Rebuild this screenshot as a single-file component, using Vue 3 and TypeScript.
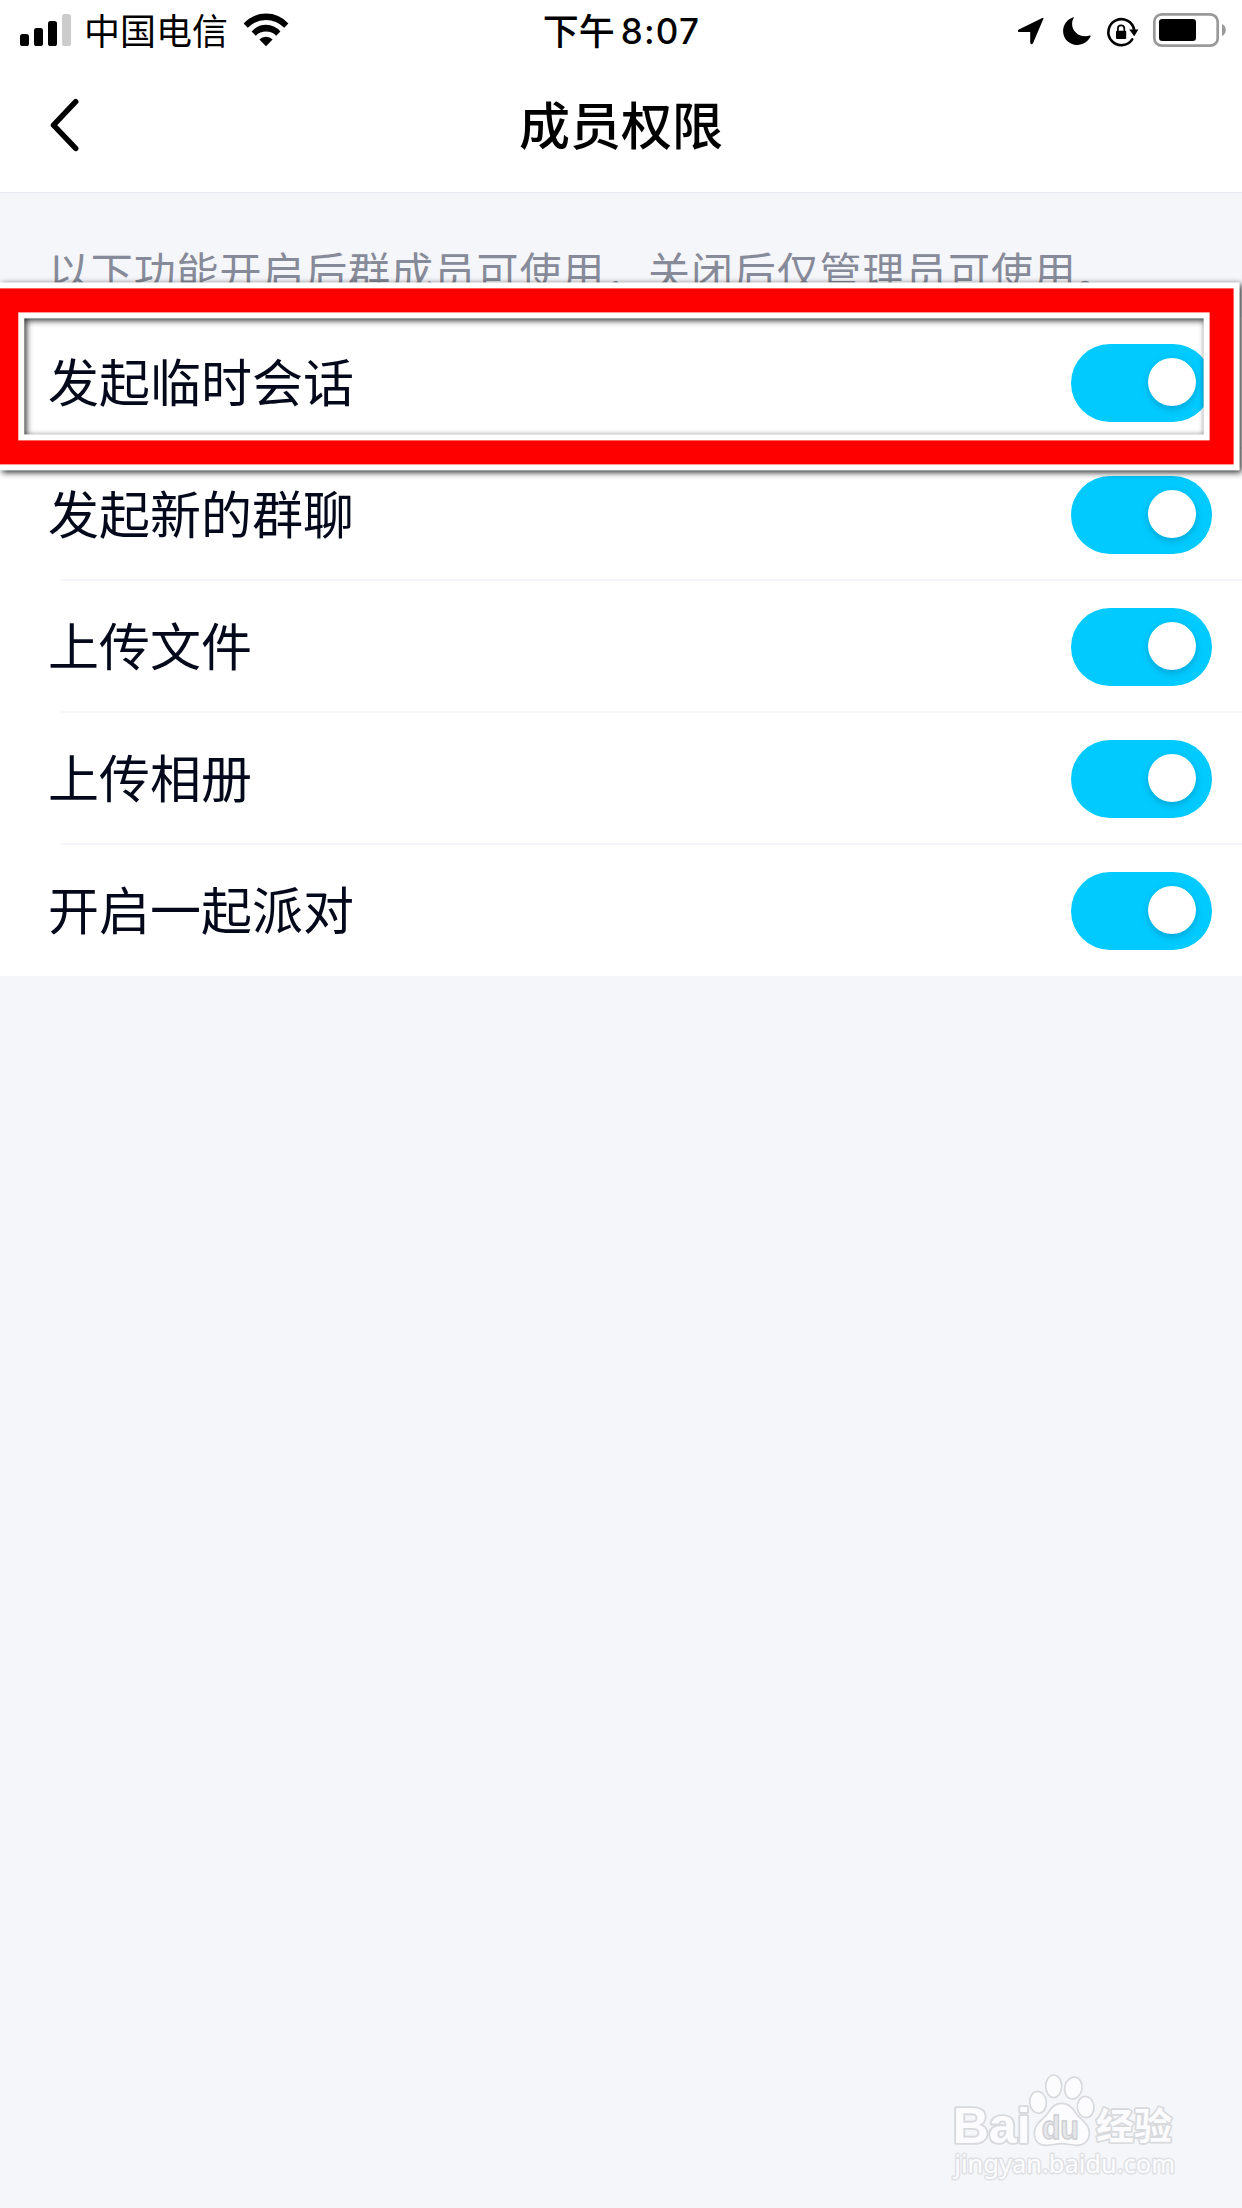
<script setup lang="ts">
import { ref } from 'vue'

interface Permission {
  id: string
  label: string
  enabled: boolean
}

const permissions = ref<Permission[]>([
  { id: 'temp-chat', label: '发起临时会话', enabled: true },
  { id: 'new-group', label: '发起新的群聊', enabled: true },
  { id: 'upload-file', label: '上传文件', enabled: true },
  { id: 'upload-album', label: '上传相册', enabled: true },
  { id: 'party', label: '开启一起派对', enabled: true },
])
</script>

<template>
  <div class="screen">
    <header class="top">
      <div class="status">
        <div class="status-left">
          <svg class="signal" width="51" height="32" viewBox="0 0 51 32">
            <rect x="0" y="20" width="9" height="12" rx="2.6" />
            <rect x="14" y="14" width="9" height="18" rx="2.6" />
            <rect x="28" y="7" width="9" height="25" rx="2.6" />
            <rect x="42" y="0" width="9" height="32" rx="2.6" fill="#ccc" />
          </svg>
          <span class="carrier">中国电信</span>
          <svg class="wifi" width="46" height="34" viewBox="0 0 46 34">
            <path d="M.6 10.4Q10 .5 23 .5t22.400 9.900L41.200 14.700Q33.500 7 23 7T4.800 14.700Z" />
            <path d="M8.600 18.500Q14.500 11.800 23 11.800t14.400 6.700L33.200 22.700Q29 18.600 23 18.600t-10.200 4.100Z" />
            <path d="M16.400 26.600Q19 23.700 23 23.700t6.600 2.900L23 33.200Z" />
          </svg>
        </div>
        <div class="clock"><span>下午</span><span class="digits">8:07</span></div>
        <svg class="status-right" width="212" height="36" viewBox="1016 12 212 36">
          <path d="M1043.500 18.600 1033 43.300q-.9 1.400-1.900.8-.9-.4-.9-1.600V32.100h-10.600q-1.500 0-1.700-1.200-.1-.9 1-1.400l22.800-11.200q1.300-.5 1.700-.2.5.4.100.5Z" />
          <path d="M1073.300 17.200c-6 2-10.200 7.500-10.200 13.900 0 8 6.200 13.900 13.900 13.900 6.200 0 11.300-3.500 13.600-8.700.3-.8-.2-1.100-.9-.8-9.600 3-17.600-3.800-17.600-11.600 0-2.300.6-4.100 1.600-5.800.4-.7.300-1-.4-.9Z" />
          <path d="M1132.200 39.400A13 13 0 1 1 1134.200 30" fill="none" stroke="#000" stroke-width="2.600" stroke-linecap="round" />
          <path d="M1129.200 29.600h9.200l-4.200 6.600Z" />
          <rect x="1116" y="30.700" width="10.200" height="8.300" rx="1" />
          <path d="M1117.900 31v-2.400a3.200 3.200 0 0 1 6.400 0V31" fill="none" stroke="#000" stroke-width="1.700" />
          <rect x="1154.300" y="14.300" width="63.400" height="31.400" rx="7.500" fill="none" stroke="#999" stroke-width="2.700" />
          <rect x="1159" y="19" width="37" height="22" rx="3.300" />
          <path d="M1222 24c5 1.800 5 10.200 0 12Z" fill="#999" />
        </svg>
      </div>
      <div class="nav">
        <svg class="back" width="30" height="56" viewBox="0 0 30 56">
          <path d="M26.700 4.700 4.500 28.200l22.200 23.200" fill="none" stroke="#000" stroke-width="5.500" stroke-linecap="round" stroke-linejoin="round" />
        </svg>
        <h1>成员权限</h1>
      </div>
    </header>

    <p class="hint">以下功能开启后群成员可使用<span class="mark">，</span>关闭后仅管理员可使用<span class="mark">。</span></p>

    <main class="list">
      <div v-for="item in permissions" :key="item.id" class="row">
        <span class="label">{{ item.label }}</span>
        <button
          class="toggle"
          :class="{ on: item.enabled }"
          role="switch"
          :aria-checked="item.enabled"
          :aria-label="item.label"
          @click="item.enabled = !item.enabled"
        >
          <span class="knob"></span>
        </button>
      </div>
    </main>

    <svg class="marker" width="1242" height="220" viewBox="0 270 1242 220">
      <rect x="6.300" y="300.400" width="1215.300" height="152" fill="none" stroke="#fff" stroke-width="36" />
      <rect x="6.300" y="300.400" width="1215.300" height="152" fill="none" stroke="#f00" stroke-width="24" />
    </svg>

    <svg class="watermark" width="270" height="150" viewBox="0 0 810 450">
      <g class="wm">
        <text class="bai" x="68" y="280" textLength="234" lengthAdjust="spacingAndGlyphs">Bai</text>
        <ellipse cx="324" cy="157" rx="25" ry="33" transform="rotate(-6 324 157)" />
        <ellipse cx="371" cy="109" rx="24" ry="34" />
        <ellipse cx="430" cy="114" rx="26" ry="33" transform="rotate(12 430 114)" />
        <ellipse cx="467" cy="171" rx="25" ry="32" transform="rotate(-5 467 171)" />
        <path d="M395 160c19 0 31 10 41 27 14 22 42 32 42 62 0 24-16 37-38 37-17 0-27-5-45-5s-28 5-45 5c-23 0-37-14-37-37 0-30 28-39 42-62 10-17 21-27 40-27Z" />
        <text class="jy" x="498" y="271" textLength="228" lengthAdjust="spacingAndGlyphs">经验</text>
        <text class="url" x="73" y="370" textLength="662" lengthAdjust="spacingAndGlyphs">jingyan.baidu.com</text>
      </g>
      <text class="du" x="335" y="266" textLength="112" lengthAdjust="spacingAndGlyphs">du</text>
    </svg>
  </div>
</template>

<style>
body {
  margin: 0;
  background: #f5f6fa;
}
</style>

<style scoped>
.screen {
  position: relative;
  width: 1242px;
  height: 2208px;
  overflow: hidden;
  background: #f5f6fa;
  color: #03081a;
  font-family: "Noto Sans CJK SC", sans-serif;
}

.top {
  box-sizing: border-box;
  height: 193px;
  background: #fff;
  border-bottom: 1px solid #e8e9f2;
  color: #000;
}

.status {
  display: grid;
  grid-template-columns: 1fr auto 1fr;
  height: 60px;
  align-items: center;
  padding: 0 14px 0 20px;
}

.status-left {
  display: flex;
  align-items: center;
}

.carrier {
  margin: -2px 0 0 13px;
  font-size: 36px;
  line-height: 52px;
}

.wifi {
  margin: -1px 0 0 15px;
}

.clock {
  display: flex;
  align-items: center;
  margin: -2px 5px 0 0;
  font-size: 36px;
  line-height: 52px;
  font-weight: 500;
}

.digits {
  margin: 4px 0 0 6px;
  font-family: Inter, sans-serif;
  font-size: 35px;
  font-weight: 500;
  letter-spacing: 1.2px;
}

.status-right {
  justify-self: end;
}

.nav {
  display: grid;
  grid-template-columns: 1fr auto 1fr;
  align-items: center;
  height: 132px;
}

.back {
  margin: -3px 0 0 49px;
}

h1 {
  margin: -6px 0 0;
  font-size: 51px;
  line-height: 72px;
  font-weight: 500;
}

.hint {
  box-sizing: border-box;
  height: 124px;
  margin: 0;
  padding: 46px 0 0 48px;
  color: #878b99;
  font-size: 42px;
  letter-spacing: 0.86px;
  line-height: 62px;
  white-space: nowrap;
}

.mark {
  position: relative;
  top: 3px;
}

.list {
  background: #fff;
}

.row {
  box-sizing: border-box;
  display: flex;
  align-items: center;
  justify-content: space-between;
  height: 132px;
  padding: 0 30px 0 48px;
  background: linear-gradient(#f5f6fa, #f5f6fa) 60px 100% / 100% 2px no-repeat;
}

.row:last-child {
  height: 131px;
  padding-top: 1px;
  background: none;
}

.label {
  margin-top: -7px;
  font-size: 51px;
  line-height: 72px;
}

.toggle {
  display: flex;
  align-items: center;
  box-sizing: border-box;
  width: 141px;
  height: 78px;
  margin: -1px 0 0;
  padding: 0 16px;
  border: 0;
  border-radius: 39px;
  background: #d5d8e0;
}

.toggle.on {
  justify-content: flex-end;
  background: #00caff;
}

.knob {
  width: 48px;
  height: 48px;
  margin-top: -1px;
  border-radius: 50%;
  background: #fff;
  box-shadow: 0 3px 7px rgba(0, 40, 60, 0.22);
}

.marker {
  position: absolute;
  left: 0;
  top: 270px;
  pointer-events: none;
  filter: drop-shadow(2px 2px 3px rgba(0, 0, 0, 0.85));
}

.watermark {
  position: absolute;
  left: 930px;
  top: 2050px;
  pointer-events: none;
}

.wm {
  fill: #fcfcfe;
  stroke: #d8d9dc;
  stroke-width: 5px;
  stroke-linejoin: round;
}

.wm text {
  paint-order: stroke;
}

.bai {
  font: bold 148px "Liberation Sans", sans-serif;
  stroke-width: 11px;
}

.jy {
  font: bold 112px "Noto Sans CJK SC", sans-serif;
  stroke-width: 10px;
}

.url {
  font: 78px "Noto Sans", sans-serif;
  stroke: #dfe0e4;
  stroke-width: 9px;
}

.du {
  font: bold 98px "Liberation Sans", sans-serif;
  fill: #e6e7eb;
  stroke: #cdced2;
  stroke-width: 4px;
}
</style>
